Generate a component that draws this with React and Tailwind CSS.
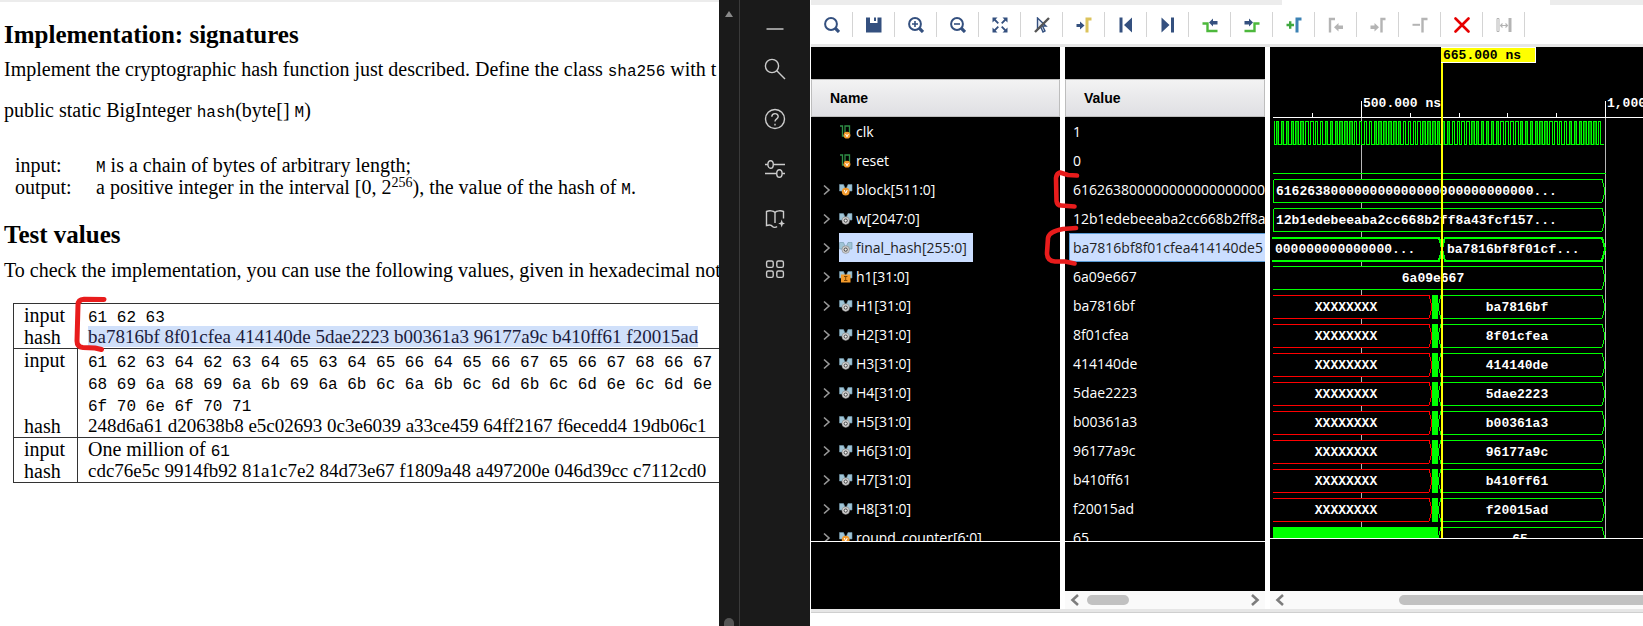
import React from "react";

const INK = "#34507f";
const DIM = "#b4b4b4";

function Lens({ children }) {
  return (
    <>
      <circle cx="7" cy="7" r="5.9" stroke={INK} strokeWidth="2" fill="none" />
      <path d="M11.2 11.2 L15 15" stroke={INK} strokeWidth="3.2" fill="none" />
      {children}
    </>
  );
}

const TOOLS = [
  ["Search", <Lens />],
  ["Save", <path d="M0 0.5H4V6H11.5V0.5H15.5V15.5H0Z M8 0.5H10V4H8Z" fill={INK} />],
  ["Zoom in", <Lens><path d="M4 7H10M7 4V10" stroke={INK} strokeWidth="1.6" /></Lens>],
  ["Zoom out", <Lens><path d="M4 7H10" stroke={INK} strokeWidth="1.6" /></Lens>],
  ["Zoom fit", (
    <>
      <path d="M0.5 0.5H5.5L0.5 5.5Z M15.5 0.5H10.5L15.5 5.5Z M0.5 15.5H5.5L0.5 10.5Z M15.5 15.5H10.5L15.5 10.5Z" fill={INK} />
      <path d="M2 2L6.3 6.3M14 2L9.7 6.3M2 14L6.3 9.7M14 14L9.7 9.7" stroke={INK} strokeWidth="1.8" />
    </>
  )],
  ["Select off", (
    <>
      <path d="M3.5 1L12 9H8.5L11 14L9 15L6.8 10L3.5 12.5Z" fill="#e8edf5" stroke={INK} strokeWidth="1.4" />
      <path d="M1 15L15 1" stroke="#555" strokeWidth="2.4" />
    </>
  )],
  ["Go to cursor", (
    <>
      <path d="M0.5 7H4V4.5L8.5 8.5L4 12.5V10H0.5Z" fill={INK} />
      <path d="M11 15.5V2H15.5" stroke="#dcc35c" strokeWidth="3" fill="none" />
    </>
  )],
  ["Go to start", <path d="M1.5 0.5H4.5V15.5H1.5Z M14 0.5V15.5L6 8Z" fill={INK} />],
  ["Go to end", <path d="M1.5 0.5V15.5L9.5 8Z M11 0.5H14V15.5H11Z" fill={INK} />],
  ["Previous transition", (
    <>
      <path d="M0.5 6.5H5.5V14H15.5" stroke="#4db83c" strokeWidth="2.4" fill="none" />
      <path d="M7 5.5L11 1.5V4H15.5V7.5H11V9.5Z" fill={INK} />
    </>
  )],
  ["Next transition", (
    <>
      <path d="M0.5 14H10.5V6.5H15.5" stroke="#4db83c" strokeWidth="2.4" fill="none" />
      <path d="M9 5.5L5 1.5V4H0.5V7.5H5V9.5Z" fill={INK} />
    </>
  )],
  ["Add marker", (
    <>
      <path d="M0.5 8H8M4.2 4.2V11.8" stroke="#3fa83f" strokeWidth="2.4" />
      <path d="M11 15.5V2H15.5" stroke="#3c82b4" strokeWidth="3" fill="none" />
    </>
  )],
  ["Previous marker", (
    <>
      <path d="M2 15.5V2H7" stroke={DIM} strokeWidth="2.4" fill="none" />
      <path d="M6 10.2L10.5 6V8.4H15V12H10.5V14.5Z" fill={DIM} />
    </>
  )],
  ["Next marker", (
    <>
      <path d="M11.5 15.5V2H15.5" stroke={DIM} strokeWidth="2.4" fill="none" />
      <path d="M9 10.2L4.5 6V8.4H0.5V12H4.5V14.5Z" fill={DIM} />
    </>
  )],
  ["Remove marker", (
    <>
      <path d="M0.5 7.8H8" stroke={DIM} strokeWidth="2" />
      <path d="M10.5 15.5V2H15.5" stroke={DIM} strokeWidth="2.4" fill="none" />
    </>
  )],
  ["Delete", <path d="M1.5 1.5L14.5 14.5M14.5 1.5L1.5 14.5" stroke="#e60000" strokeWidth="2.6" strokeLinecap="round" />],
  ["Measure", (
    <>
      <path d="M1 1.5H3V14.5H1Z" stroke={DIM} fill="none" />
      <path d="M12.5 1H15.5V15H12.5Z" fill={DIM} />
      <path d="M4.5 8.5H11M6.5 6.5L4.5 8.5L6.5 10.5M9.5 6.5L11.5 8.5L9.5 10.5" stroke={DIM} strokeWidth="1.1" fill="none" />
    </>
  )],
];

const SIDE = [
  ["Collapse", <path d="M3.5 2H20.5" stroke="#999" strokeWidth="2" />],
  ["Search", (
    <>
      <circle cx="9" cy="9" r="6.6" />
      <path d="M13.8 13.8L22 22" />
    </>
  )],
  ["Help", (
    <>
      <circle cx="12" cy="12" r="9.5" />
      <path d="M8.8 9.8C8.8 5.6 15.2 5.6 15.2 9.6C15.2 12 12 11.8 12 14.6M12 16.8V18.6" />
    </>
  )],
  ["Settings", (
    <>
      <ellipse cx="7.6" cy="7.5" rx="2.7" ry="3.8" />
      <ellipse cx="16.4" cy="16.5" rx="2.7" ry="3.8" />
      <path d="M2 7.5H4.9M10.3 7.5H22M2 16.5H13.7M19.1 16.5H22" />
    </>
  )],
  ["Read", (
    <>
      <path d="M12 5.5V16M12 5.5C10.5 3.6 6 3.4 3.5 4.5V18.5C6 17.8 8.5 18 9.5 19.5C10.5 20.6 13 20.6 14 19.5M12 5.5C13.5 3.6 18 3.4 20.5 4.5V11.5" />
      <path d="M18.7 12.5L19.7 15.4L22 16.4L19.7 17.4L18.7 20.4L17.7 17.4L15.2 16.4L17.7 15.4Z" fill="#ccc" stroke="none" />
    </>
  )],
  ["Apps", (
    <>
      <rect x="3.6" y="4" width="6.6" height="6.4" rx="1.6" />
      <rect x="13.8" y="4" width="6.6" height="6.4" rx="1.6" />
      <rect x="3.6" y="14" width="6.6" height="6.4" rx="1.6" />
      <rect x="13.8" y="14" width="6.6" height="6.4" rx="1.6" />
    </>
  )],
];

const SIGNALS = [
  ["clk", "1", "bit"],
  ["reset", "0", "bit"],
  ["block[511:0]", "616263800000000000000000", "var"],
  ["w[2047:0]", "12b1edebeeaba2cc668b2ff8a", "bus"],
  ["final_hash[255:0]", "ba7816bf8f01cfea414140de5", "bus"],
  ["h1[31:0]", "6a09e667", "int"],
  ["H1[31:0]", "ba7816bf", "bus"],
  ["H2[31:0]", "8f01cfea", "bus"],
  ["H3[31:0]", "414140de", "bus"],
  ["H4[31:0]", "5dae2223", "bus"],
  ["H5[31:0]", "b00361a3", "bus"],
  ["H6[31:0]", "96177a9c", "bus"],
  ["H7[31:0]", "b410ff61", "bus"],
  ["H8[31:0]", "f20015ad", "bus"],
  ["round_counter[6:0]", "65", "var"],
];

function SignalIcon({ kind }) {
  if (kind === "bit") {
    return (
      <svg className="h-[14px] w-[14px] shrink-0" viewBox="0 0 14 14" aria-hidden="true">
        <path d="M1 1H3.5V11H6M6 8V1H10.5V8" stroke="#2f8f46" strokeWidth="1.3" fill="none" />
        <circle cx="8" cy="10.2" r="3.4" fill="#f39a2b" />
        <path d="M6.6 9L8 11.8L9.4 9" stroke="#fff" fill="none" />
      </svg>
    );
  }
  return (
    <svg className="h-[14px] w-[14px] shrink-0" viewBox="0 0 14 14" aria-hidden="true">
      <path d="M0.5 1.5H4.5L6 5V8H0.5Z M13 1.5H9L7.5 5V8H13Z" fill="#9fc4d6" stroke="#6f95a8" strokeWidth="0.6" />
      {kind === "bus" && (
        <>
          <circle cx="6.7" cy="8.6" r="3.8" fill="#cfcfcf" stroke="#777" strokeWidth="0.5" />
          <circle cx="6.7" cy="8.6" r="1.6" fill="#eee" stroke="#444" strokeWidth="1" />
        </>
      )}
      {kind === "var" && (
        <>
          <circle cx="6.7" cy="8.6" r="3.9" fill="#f39a2b" />
          <path d="M5.2 7L6.7 10.2L8.2 7" stroke="#fff" fill="none" />
        </>
      )}
      {kind === "int" && (
        <>
          <path d="M2 4.5H11.5V12.5H2Z" fill="#f39a2b" />
          <path d="M5 6.5H8.4M5 10.5H8.4M6.7 6.5V10.5" stroke="#7a4300" fill="none" />
        </>
      )}
    </svg>
  );
}

const COL_HEAD =
  "h-[38px] border border-[#bdbdbd] bg-linear-to-b from-[#f3f3f3] to-[#dfdfe3] p-0 text-left font-['Liberation_Sans',sans-serif] text-sm font-bold text-black";

function NamePanel() {
  return (
    <div className="flex w-[249px] shrink-0 flex-col bg-black pt-8">
      <div className="h-[462px] overflow-hidden">
        <table className="w-full border-separate border-spacing-0">
          <thead>
            <tr><th className={COL_HEAD}><span className="pl-[18px]">Name</span></th></tr>
          </thead>
          <tbody>
            {SIGNALS.map(([name, , kind]) => (
              <tr key={name}>
                <td className="h-[29px] p-0">
                  <div className="flex h-[29px] items-center pl-[11px]">
                    <span className="flex w-[17px] shrink-0">
                      {kind !== "bit" && (
                        <button type="button" aria-label={`Expand ${name}`}>
                          <svg className="h-3 w-[10px]" viewBox="0 0 10 12" fill="none" aria-hidden="true">
                            <path d="M2 1.5L7 6L2 10.5" stroke="#999" strokeWidth="1.6" />
                          </svg>
                        </button>
                      )}
                    </span>
                    <span className={name === "final_hash[255:0]" ? "flex h-[29px] items-center gap-[3px] bg-[#cbdeff] pr-[6px] text-[#222]" : "flex h-[29px] items-center gap-[3px]"}>
                      <SignalIcon kind={kind} />
                      {name}
                    </span>
                  </div>
                </td>
              </tr>
            ))}
          </tbody>
        </table>
      </div>
      <div className="border-t border-white" />
    </div>
  );
}

function Chevron({ right }) {
  return (
    <svg className="h-[14px] w-[10px]" viewBox="0 0 10 14" fill="none" aria-hidden="true">
      <path d={right ? "M2 2L7.5 7L2 12" : "M8 2L2.5 7L8 12"} stroke="#7d7d7d" strokeWidth="2.6" />
    </svg>
  );
}

function ValuePanel() {
  return (
    <div className="relative flex w-[200px] shrink-0 flex-col bg-black pt-8">
      <div className="h-[462px] overflow-hidden">
        <table className="w-full table-fixed border-separate border-spacing-0">
          <thead>
            <tr><th className={COL_HEAD}><span className="pl-[18px]">Value</span></th></tr>
          </thead>
          <tbody>
            {SIGNALS.map(([name, value]) => (
              <tr key={name}>
                <td className="h-[29px] overflow-hidden p-0 pl-1 whitespace-nowrap">
                  <div className={name === "final_hash[255:0]" ? "h-[29px] border border-r-0 border-[#5a9bd5] bg-[#cbdeff] pl-[3px] leading-[27px] text-[#222]" : "h-[29px] pl-1 leading-[29px]"}>
                    {value}
                  </div>
                </td>
              </tr>
            ))}
          </tbody>
        </table>
      </div>
      <div className="border-t border-white" />
      <div className="mt-auto flex h-[18px] items-center bg-[#fafafa] px-[5px]">
        <button type="button" aria-label="Scroll values left"><Chevron /></button>
        <span className="ml-[7px] h-[10px] w-[42px] rounded-full bg-[#c1c1c1]" />
        <button type="button" aria-label="Scroll values right" className="ml-auto"><Chevron right /></button>
      </div>
      <svg className="pointer-events-none absolute top-[120px] left-[-22px] h-[104px] w-[40px]" viewBox="0 0 40 104" fill="none" stroke="#e81c1c" strokeWidth="4.6" strokeLinecap="round" strokeLinejoin="round" aria-hidden="true">
        <path d="M34 8.5L25 8L17 5.5Q13.500 6.500 13 11L13.500 34Q14 38.500 18 38.500L31.500 39.500" />
        <path d="M33 61L20 62Q6 64.500 5 71L4 86Q4 94 12 94.500L22 94.500L31.500 96.500" />
      </svg>
    </div>
  );
}

const HALF = 2.44;
const CLOCK_EDGES = Array.from({ length: 136 }, (_, i) => Math.min(335, Math.floor(4 + i * HALF)));
const clockPath = CLOCK_EDGES.slice(1).reduce(
  (d, x, i) => `${d}V${i % 2 ? 74 : 97}.5H${x}.5`,
  "M3.5 74.5H4.5",
);
const CLOCK_SHADES = CLOCK_EDGES.slice(0, -1)
  .map((x, i) => ({ x, i, w: CLOCK_EDGES[i + 1] - x }))
  .filter(({ i }) => i % 2 === 1 && ((i - 1) / 2) % 10 < 6);

const GREEN = "#00ff00";

function Hex({ row, from = 3, to = 335, color = GREEN, closed, width = 1 }) {
  const top = 70 + row * 29 + 4.5;
  const mid = top + 11.5;
  const bottom = top + 23;
  const start = closed === "point" ? `M${from} ${mid}L${from + 3} ${top}` : `M${from} ${top}`;
  const end = closed === "point" ? `H${from + 3}L${from} ${mid}` : closed === "flat" ? `H${from}V${top}` : `H${from}`;
  return (
    <path d={`${start}H${to - 3}L${to} ${mid}L${to - 3} ${bottom}${end}`} fill="#000" stroke={color} strokeWidth={width} shapeRendering="crispEdges" />
  );
}

function WaveText({ row, x, children, middle }) {
  return (
    <text x={x} y={70 + row * 29 + 20} fill="#fff" textAnchor={middle ? "middle" : "start"}>{children}</text>
  );
}

function WavePanel() {
  return (
    <div className="flex min-w-0 flex-1 flex-col bg-black">
      <div className="h-[491px] overflow-hidden">
        <svg className="h-full w-full font-['Liberation_Mono',monospace] text-[13px] font-bold" role="img" aria-label="Signal waveforms">
          <g shapeRendering="crispEdges">
            <rect x="91" y="54" width="1" height="16" fill="#fff" />
            <rect x="335" y="54" width="1" height="16" fill="#fff" />
            <rect x="91" y="71" width="1" height="420" fill="#b8b8b8" />
            <rect x="335" y="71" width="1" height="420" fill="#b8b8b8" />
            <rect x="3" y="70" width="100%" height="1" fill="#fff" />
            {[42, 140, 189, 237, 286].map((x) => (
              <rect key={x} x={x} y="66" width="1" height="4" fill="#fff" />
            ))}
            {CLOCK_SHADES.map(({ x, w }) => (
              <rect key={x} x={x} y="74" width={w} height="24" fill="#008c00" />
            ))}
            <path d={clockPath} fill="none" stroke={GREEN} />
            <rect x="3" y="126" width="333" height="1" fill={GREEN} />
          </g>
          <text x="93" y="60" fill="#fff">500.000 ns</text>
          <text x="337" y="60" fill="#fff">1,000</text>
          <Hex row={2} from={3.5} closed="flat" />
          <Hex row={3} from={3.5} closed="flat" />
          <Hex row={4} from={2} to={172} width={2} />
          <Hex row={4} from={172} closed="point" width={2} />
          <Hex row={5} />
          {SIGNALS.slice(6, 14).map(([name, value], i) => (
            <g key={name}>
              <Hex row={i + 6} to={162} color="#ff0000" />
              <Hex row={i + 6} from={168} closed="point" />
              <rect x="162" y={70 + (i + 6) * 29 + 4} width="6" height="24" fill={GREEN} />
              <WaveText row={i + 6} x={76} middle>XXXXXXXX</WaveText>
              <WaveText row={i + 6} x={247} middle>{value}</WaveText>
            </g>
          ))}
          <Hex row={14} from={168} closed="point" />
          <rect x="3" y="480" width="165" height="11" fill={GREEN} />
          <WaveText row={14} x={250} middle>65</WaveText>
          <WaveText row={2} x={6}>616263800000000000000000000000000...</WaveText>
          <WaveText row={3} x={6}>12b1edebeeaba2cc668b2ff8a43fcf157...</WaveText>
          <WaveText row={4} x={5}>000000000000000...</WaveText>
          <WaveText row={4} x={177}>ba7816bf8f01cf...</WaveText>
          <WaveText row={5} x={163} middle>6a09e667</WaveText>
          <rect x="171" y="0" width="2" height="491" fill="#ffff00" />
          <rect x="171" y="0" width="95" height="16" fill="#fff" />
          <rect x="171" y="1" width="94" height="14" fill="#ffff00" />
          <text x="173" y="12" fill="#000">665.000 ns</text>
        </svg>
      </div>
      <div className="border-t border-white" />
      <div className="mt-auto flex h-[18px] items-center bg-[#fafafa] pl-[5px]">
        <button type="button" aria-label="Scroll waveforms left"><Chevron /></button>
        <span className="ml-[114px] h-[10px] flex-1 rounded-l-full bg-[#c1c1c1]" />
      </div>
    </div>
  );
}

const Mono = ({ children }) => (
  <code className="font-['Liberation_Mono',monospace] text-base leading-none">{children}</code>
);

const VECTORS = [
  { input: [<Mono>61 62 63</Mono>], hash: "ba7816bf 8f01cfea 414140de 5dae2223 b00361a3 96177a9c b410ff61 f20015ad", marked: true },
  {
    input: [
      <Mono>61 62 63 64 62 63 64 65 63 64 65 66 64 65 66 67 65 66 67 68 66 67</Mono>,
      <Mono>68 69 6a 68 69 6a 6b 69 6a 6b 6c 6a 6b 6c 6d 6b 6c 6d 6e 6c 6d 6e</Mono>,
      <Mono>6f 70 6e 6f 70 71</Mono>,
    ],
    hash: "248d6a61 d20638b8 e5c02693 0c3e6039 a33ce459 64ff2167 f6ecedd4 19db06c1",
  },
  { input: [<>One million of <Mono>61</Mono></>], hash: "cdc76e5c 9914fb92 81a1c7e2 84d73e67 f1809a48 a497200e 046d39cc c7112cd0" },
];

function Paper() {
  return (
    <article className="min-w-0 overflow-hidden border-t-2 border-[#ececec] bg-white pl-1 font-['Liberation_Serif',serif] text-xl leading-[22px] whitespace-nowrap text-black">
      <h2 className="mt-5 text-[25px] leading-[26px] font-bold">Implementation: signatures</h2>
      <p className="mt-[10px]">
        Implement the cryptographic hash function just described. Define the class <Mono>sha256</Mono> with t
      </p>
      <p className="mt-[19px]">public static BigInteger <Mono>hash</Mono>(byte[] <Mono>M</Mono>)</p>
      <dl className="mt-[33px] ml-[11px] grid grid-cols-[81px_1fr]">
        <dt>input:</dt>
        <dd><Mono>M</Mono> is a chain of bytes of arbitrary length;</dd>
        <dt>output:</dt>
        <dd>a positive integer in the interval [0, 2<sup className="text-sm leading-none">256</sup>), the value of the hash of <Mono>M</Mono>.</dd>
      </dl>
      <h2 className="mt-6 text-[25px] leading-[26px] font-bold">Test values</h2>
      <p className="mt-[11px]">To check the implementation, you can use the following values, given in hexadecimal nota</p>
      <div className="relative mt-[22px] ml-[9px]">
        <table className="w-[760px] border-collapse border border-[#333]">
          {VECTORS.map((v) => (
            <tbody key={v.hash} className="border border-[#333]">
              <tr>
                <th scope="row" className="w-16 p-0 pl-[10px] text-left align-top font-normal">input</th>
                <td className="border-l border-[#333] p-0 pl-[10px]">
                  {v.input.map((line, i) => <div key={i} className="h-[22px]">{line}</div>)}
                </td>
              </tr>
              <tr>
                <th scope="row" className="p-0 pl-[10px] text-left font-normal">hash</th>
                <td className="border-l border-[#333] p-0 pl-[10px] text-[19px]">
                  <span className={v.marked ? "bg-[#d0e0fa] leading-none text-[#1c1c3c]" : ""}>{v.hash}</span>
                </td>
              </tr>
            </tbody>
          ))}
        </table>
        <svg className="pointer-events-none absolute top-[-8px] left-[59px] h-[60px] w-[38px]" viewBox="0 0 38 60" fill="none" stroke="#e81c1c" strokeWidth="5" strokeLinecap="round" strokeLinejoin="round" aria-hidden="true">
          <path d="M32 4.500L12 4.200Q6 4.500 6 10L5 46Q5 52 11 52.500L23 53L29.500 54.500" />
        </svg>
      </div>
    </article>
  );
}

export default function App() {
  return (
    <main className="grid h-screen min-h-[626px] grid-cols-[719fr_91px_833fr] grid-rows-[minmax(0,1fr)] overflow-hidden bg-white">
      <Paper />
      <aside className="flex bg-[#1a1a1a]">
        <div className="flex w-5 flex-col items-center justify-between overflow-hidden pt-[11px]">
          <svg className="h-[6px] w-2" viewBox="0 0 8 6" aria-hidden="true"><path d="M4 0L8 6H0Z" fill="#8a8a8a" /></svg>
          <span className="h-2 w-[10px] rounded-t-full bg-[#555]" />
        </div>
        <nav aria-label="Reader tools" className="flex flex-1 flex-col items-center gap-[26px] border-l border-[#3a3a3a] pt-[27px]">
          {SIDE.map(([label, art], i) => (
            <button key={label} type="button" aria-label={label}>
              <svg className={i === 0 ? "h-1 w-6" : "h-6 w-6"} viewBox={i === 0 ? "0 0 24 4" : "0 0 24 24"} fill="none" stroke="#ccc" strokeWidth="1.4" aria-hidden="true">{art}</svg>
            </button>
          ))}
        </nav>
      </aside>
      <section className="flex min-w-0 flex-col border-l border-white font-['Open_Sans','Noto_Sans',sans-serif] text-sm text-white">
        <div className="flex h-[5px] bg-[#ececec]">
          <div className="ml-[471px] w-[268px] bg-white" />
        </div>
        <div role="toolbar" aria-label="Waveform tools" className="flex h-[42px] items-center overflow-hidden border-b-[3px] border-[#e6e6e6] bg-white">
          {TOOLS.map(([label, art]) => (
            <button key={label} type="button" aria-label={label} className="flex h-[25px] w-[42px] shrink-0 items-center justify-center border-r border-[#d4d4d4]">
              <svg className="h-4 w-4" viewBox="0 0 16 16" fill="none" aria-hidden="true">{art}</svg>
            </button>
          ))}
        </div>
        <div className="flex min-h-0 flex-1 gap-[5px]">
          <NamePanel />
          <ValuePanel />
          <WavePanel />
        </div>
        <div className="h-[17px] border-t-[3px] border-[#e6e6e6]">
          <div className="border-t border-[#cfcfcf]" />
        </div>
      </section>
    </main>
  );
}
